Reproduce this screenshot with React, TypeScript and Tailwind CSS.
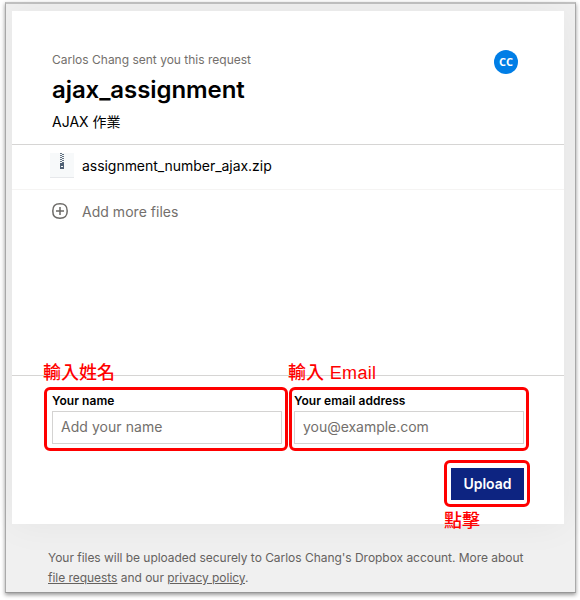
function ZipIcon() {
  return (
    <svg width="24" height="26" viewBox="0 0 24 26" shapeRendering="crispEdges">
      <rect width="24" height="25" fill="#f7f9fa" />
      <rect y="24" width="24" height="1" fill="#e6e8eb" />
      {[0, 2, 4, 6, 8].map((y) => (
        <g key={y} fill="#637282">
          <rect x="10" y={y} width="2" height="1" />
          <rect x="12" y={y + 1} width="2" height="1" />
        </g>
      ))}
      <path d="M10 10h4v6h-4z" fill="#4f6074" />
      <path d="M11 13h2v1h-2z" fill="#f7f9fa" />
    </svg>
  );
}

function AddIcon() {
  return (
    <svg width="16" height="16" viewBox="0 0 16 16" fill="none" stroke="#6b6966" strokeWidth="1.5">
      <path d="M8 .8C13.2.8 15.2 2.800 15.200 8S13.200 15.200 8 15.200.800 13.200.800 8 2.800.8 8 .8Z" />
      <path d="M8 4v8M4 8h8" />
    </svg>
  );
}

export default function App() {
  return (
    <div className="h-[600px] w-[580px] overflow-hidden bg-white pl-[5px] pt-[2px] font-['Inter','Noto_Sans_CJK_TC',sans-serif]">
      <div className="h-[591px] w-[571px] border border-t-2 border-[#aaaaaa] border-t-[#c1c1c1] border-b-[#979797] bg-[#f0f0f0] px-[6px] pt-[7px] shadow-[0_2px_4px_rgba(0,0,0,0.4)]">
        <main className="relative h-[513px] w-[552px] bg-white shadow-[0_0_36px_rgba(0,0,0,0.05)]">
          <header className="flex h-[134px] justify-between border-b border-[#d6d5d4] pl-[40px] pr-[46px]">
            <div className="pt-[40px]">
              <p className="whitespace-nowrap text-[12px] leading-[18px] text-[#736f6c]">Carlos Chang sent you this request</p>
              <h1 className="mt-[6px] whitespace-nowrap text-[24px] font-semibold leading-[30px] tracking-[-0.08px] text-black">ajax_assignment</h1>
              <p className="mt-[7px] whitespace-nowrap text-[14px] leading-[20px] text-black">AJAX 作業</p>
            </div>
            <div className="mt-[39px] flex h-6 w-6 items-center justify-center rounded-full bg-[#007ee6] font-['Open_Sans',sans-serif] text-[11px] font-bold text-white">CC</div>
          </header>
          <section className="h-[231px] border-b border-[#d6d5d4]">
            <div className="flex h-[45px] items-center border-b border-[#f5f4f3] pl-[38px]">
              <div className="mb-[2px] h-[26px]"><ZipIcon /></div>
              <span className="mb-[2px] ml-2 whitespace-nowrap text-[14px] leading-5 tracking-[-0.04px] text-black">assignment_number_ajax.zip</span>
            </div>
            <div className="flex h-[44px] items-center pl-[40px]">
              <div className="mb-[2px]"><AddIcon /></div>
              <span className="mb-[2px] ml-[14px] whitespace-nowrap text-[14px] tracking-[0.03px] text-[#736f6c]">Add more files</span>
            </div>
          </section>
          <form className="px-[40px]" onSubmit={(e) => e.preventDefault()}>
            <div className="flex gap-3 pt-[17px]">
              <label className="block w-[230px] text-[12px] font-semibold leading-[16px] tracking-[0.05px] text-black">
                Your name
                <input placeholder="Add your name" className="mt-[2px] block h-[33px] w-full border border-[#d4d3d2] bg-white px-[8px] pb-[2px] text-[14px] font-normal outline-none placeholder:text-[#736f6c]" />
              </label>
              <label className="block w-[230px] text-[12px] font-semibold leading-[16px] tracking-[0.05px] text-black">
                Your email address
                <input placeholder="you@example.com" className="mt-[2px] block h-[33px] w-full border border-[#d4d3d2] bg-white px-[8px] pb-[2px] text-[14px] font-normal tracking-[-0.03px] outline-none placeholder:text-[#736f6c]" />
              </label>
            </div>
            <div className="mt-[24px] flex justify-end">
              <button className="h-[32px] w-[73px] bg-[#0d2481] pb-[2px] text-[14px] font-semibold text-white">Upload</button>
            </div>
          </form>
          <div className="absolute left-[32px] top-[376px] h-[64px] w-[244px] rounded-[6px] border-[3px] border-[#ff0000]" />
          <div className="absolute left-[277px] top-[376px] h-[64px] w-[240px] rounded-[6px] border-[3px] border-[#ff0000]" />
          <div className="absolute left-[432px] top-[449px] h-[47px] w-[86px] rounded-[6px] border-[3px] border-[#ff0000]" />
          <span className="absolute left-[31px] top-[350px] whitespace-nowrap text-[18px] font-medium leading-[24px] text-[#ff0000]">輸入姓名</span>
          <span className="absolute left-[276px] top-[350px] whitespace-nowrap text-[18px] font-medium leading-[24px] text-[#ff0000]">輸入 <span className="ml-px font-['Liberation_Sans',sans-serif] font-normal tracking-[0.3px]">Email</span></span>
          <span className="absolute left-[432px] top-[498px] whitespace-nowrap text-[18px] font-medium leading-[24px] text-[#ff0000]">點擊</span>
        </main>
        <footer className="relative pl-[36px] pt-[24px] text-[12px] leading-[20px] tracking-[-0.035px] text-[#65625f]">
          <p className="whitespace-nowrap">Your files will be uploaded securely to Carlos Chang's Dropbox account. More about</p>
          <p className="whitespace-nowrap"><a className="underline">file requests</a> and our <a className="underline">privacy policy</a>.</p>
        </footer>
      </div>
    </div>
  );
}
